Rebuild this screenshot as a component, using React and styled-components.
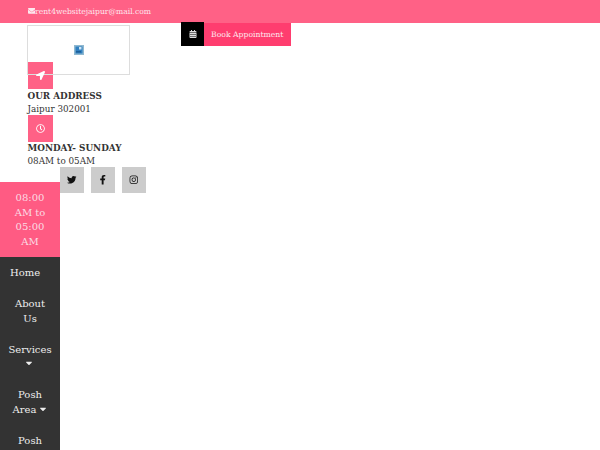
import React from 'react';
import styled, { createGlobalStyle } from 'styled-components';
import {
  FaCalendarAlt,
  FaCaretDown,
  FaEnvelope,
  FaFacebookF,
  FaInstagram,
  FaLocationArrow,
  FaRegClock,
  FaTwitter,
} from 'react-icons/fa';

const GlobalStyle = createGlobalStyle`
  html, body {
    margin: 0;
    padding: 0;
    overflow: hidden;
    background: #fff;
  }
`;

const Page = styled.div`
  width: 600px;
  height: 450px;
  overflow: hidden;
  font-family: "DejaVu Serif", serif;
  color: #333;
`;

const TopBar = styled.div`
  height: 23px;
  padding-left: 27.5px;
  display: flex;
  align-items: center;
  background: #ff6186;
  color: #fde8ee;
  font-size: 7.6px;
  padding-bottom: 1px;
  box-sizing: border-box;
`;

const Header = styled.div`
  display: flex;
  align-items: flex-start;
  padding-left: 27px;
`;

const LogoBox = styled.div`
  width: 103px;
  height: 49.5px;
  margin-top: 2px;
  box-sizing: border-box;
  border: 1px solid #ddd;
  display: flex;
  align-items: center;
  justify-content: center;
`;

const Appointment = styled.div`
  margin-left: 51px;
  display: flex;
  height: 23px;
`;

const AppointmentIcon = styled.div`
  width: 23px;
  height: 24px;
  margin-top: -1px;
  background: #000;
  color: #ddd;
  font-size: 8px;
  display: flex;
  align-items: center;
  justify-content: center;
`;

const AppointmentLabel = styled.div`
  width: 87px;
  box-sizing: border-box;
  padding-left: 7px;
  background: #ff3d6f;
  color: #fde8ee;
  font-size: 7.7px;
  display: flex;
  align-items: center;
`;

const Info = styled.div`
  padding-left: 27.5px;
  font-size: 8.8px;
  line-height: 13px;
`;

const InfoIcon = styled.div`
  width: 25px;
  height: 27px;
  background: #ff6186;
  color: #fff;
  font-size: 9px;
  display: flex;
  align-items: center;
  justify-content: center;
  margin-top: ${(p) => p.$offset}px;
`;

const InfoText = styled.div`
  height: 26px;
  padding-top: ${(p) => p.$top}px;
  box-sizing: border-box;
`;

const InfoTitle = styled.div`
  font-weight: bold;
`;

const Lower = styled.div`
  display: flex;
  align-items: flex-start;
  margin-top: -1px;
`;

const Sidebar = styled.div`
  width: 60px;
  margin-top: 15px;
  flex-shrink: 0;
`;

const Hours = styled.div`
  height: 75px;
  box-sizing: border-box;
  padding: 9px 8px 0;
  background: #ff5b83;
  color: #fbdbe3;
  font-size: 10px;
  line-height: 14.6px;
  text-align: center;
`;

const Nav = styled.nav`
  background: #333;
  padding: 9px 8px 0;
  height: 300px;
`;

const NavItem = styled.div`
  color: #eee;
  font-size: 10px;
  line-height: 14.6px;
  text-align: ${(p) => (p.$left ? 'left' : 'center')};
  margin-left: ${(p) => (p.$left ? '2px' : '0')};
  margin-bottom: 16.4px;
  svg {
    font-size: 10px;
    margin-left: -2px;
    vertical-align: -1px;
  }
`;

const Socials = styled.div`
  display: flex;
  gap: 7px;
`;

const SocialButton = styled.div`
  width: 24px;
  height: 26px;
  background: #ccc;
  color: #111;
  font-size: 9.5px;
  display: flex;
  align-items: center;
  justify-content: center;
`;

const BrokenImage = () => (
  <svg width="10" height="10" viewBox="0 0 10 10">
    <rect width="10" height="10" fill="#8fb8d0" />
    <rect x="1.5" y="1.5" width="7" height="7" fill="#2f7fc0" />
    <rect x="5" y="2" width="2.5" height="2.5" fill="#cfe6f5" />
    <rect x="2" y="6" width="5" height="1.5" fill="#1c5f98" />
  </svg>
);

export default function App() {
  return (
    <Page>
      <GlobalStyle />
      <TopBar>
        <FaEnvelope />
        <span>rent4websitejaipur@mail.com</span>
      </TopBar>
      <Header>
        <LogoBox>
          <BrokenImage />
        </LogoBox>
        <Appointment>
          <AppointmentIcon>
            <FaCalendarAlt />
          </AppointmentIcon>
          <AppointmentLabel>Book Appointment</AppointmentLabel>
        </Appointment>
      </Header>
      <Info>
        <InfoIcon $offset={-12.5}>
          <FaLocationArrow />
        </InfoIcon>
        <InfoText $top={1}>
          <InfoTitle>OUR ADDRESS</InfoTitle>
          <div>Jaipur 302001</div>
        </InfoText>
        <InfoIcon $offset={0}>
          <FaRegClock />
        </InfoIcon>
        <InfoText $top={0}>
          <InfoTitle>MONDAY- SUNDAY</InfoTitle>
          <div>08AM to 05AM</div>
        </InfoText>
      </Info>
      <Lower>
        <Sidebar>
          <Hours>08:00 AM to 05:00 AM</Hours>
          <Nav>
            <NavItem $left>Home</NavItem>
            <NavItem>About Us</NavItem>
            <NavItem>
              Services <FaCaretDown />
            </NavItem>
            <NavItem>
              Posh Area <FaCaretDown />
            </NavItem>
            <NavItem>Posh</NavItem>
          </Nav>
        </Sidebar>
        <Socials>
          <SocialButton>
            <FaTwitter />
          </SocialButton>
          <SocialButton>
            <FaFacebookF />
          </SocialButton>
          <SocialButton>
            <FaInstagram />
          </SocialButton>
        </Socials>
      </Lower>
    </Page>
  );
}
